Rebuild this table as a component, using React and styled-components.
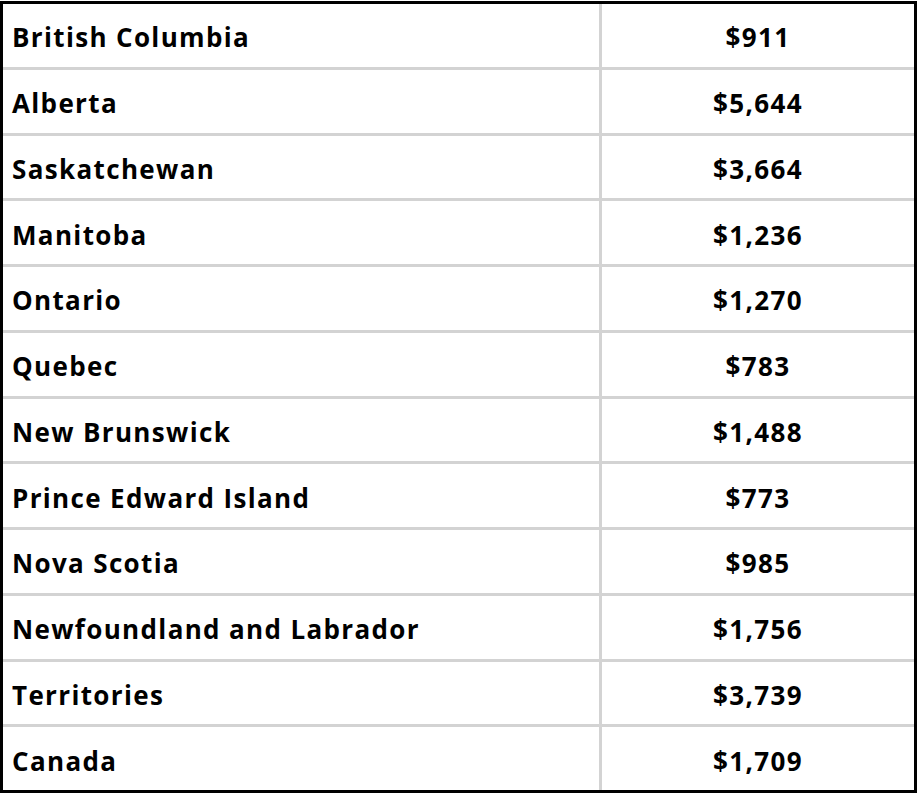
import React from "react";
import styled, { createGlobalStyle } from "styled-components";

const Global = createGlobalStyle`
  html, body { margin: 0; padding: 0; background: #fff; }
  body { font-family: "Open Sans", "Liberation Sans", sans-serif; }
`;

const Frame = styled.div`
  margin-top: 1px;
  width: 911px;
  border: 3px solid #000;
`;

const Grid = styled.div`
  display: grid;
  grid-template-columns: 596px 312px;
  grid-auto-rows: 62.75px;
  gap: 3px;
  background: #d3d3d3;
`;

const Cell = styled.div`
  background: #fff;
  display: flex;
  align-items: center;
  justify-content: ${(p) => (p.$center ? "center" : "flex-start")};
  padding: 4px 9px 0;
  font-size: 26px;
  letter-spacing: 1.35px;
  font-weight: 700;
  color: #000;
  white-space: nowrap;
`;

const rows = [
  ["British Columbia", "$911"],
  ["Alberta", "$5,644"],
  ["Saskatchewan", "$3,664"],
  ["Manitoba", "$1,236"],
  ["Ontario", "$1,270"],
  ["Quebec", "$783"],
  ["New Brunswick", "$1,488"],
  ["Prince Edward Island", "$773"],
  ["Nova Scotia", "$985"],
  ["Newfoundland and Labrador", "$1,756"],
  ["Territories", "$3,739"],
  ["Canada", "$1,709"],
];

export default function App() {
  return (
    <>
      <Global />
      <Frame>
        <Grid>
          {rows.map(([name, value]) => (
            <React.Fragment key={name}>
              <Cell>{name}</Cell>
              <Cell $center>{value}</Cell>
            </React.Fragment>
          ))}
        </Grid>
      </Frame>
    </>
  );
}
